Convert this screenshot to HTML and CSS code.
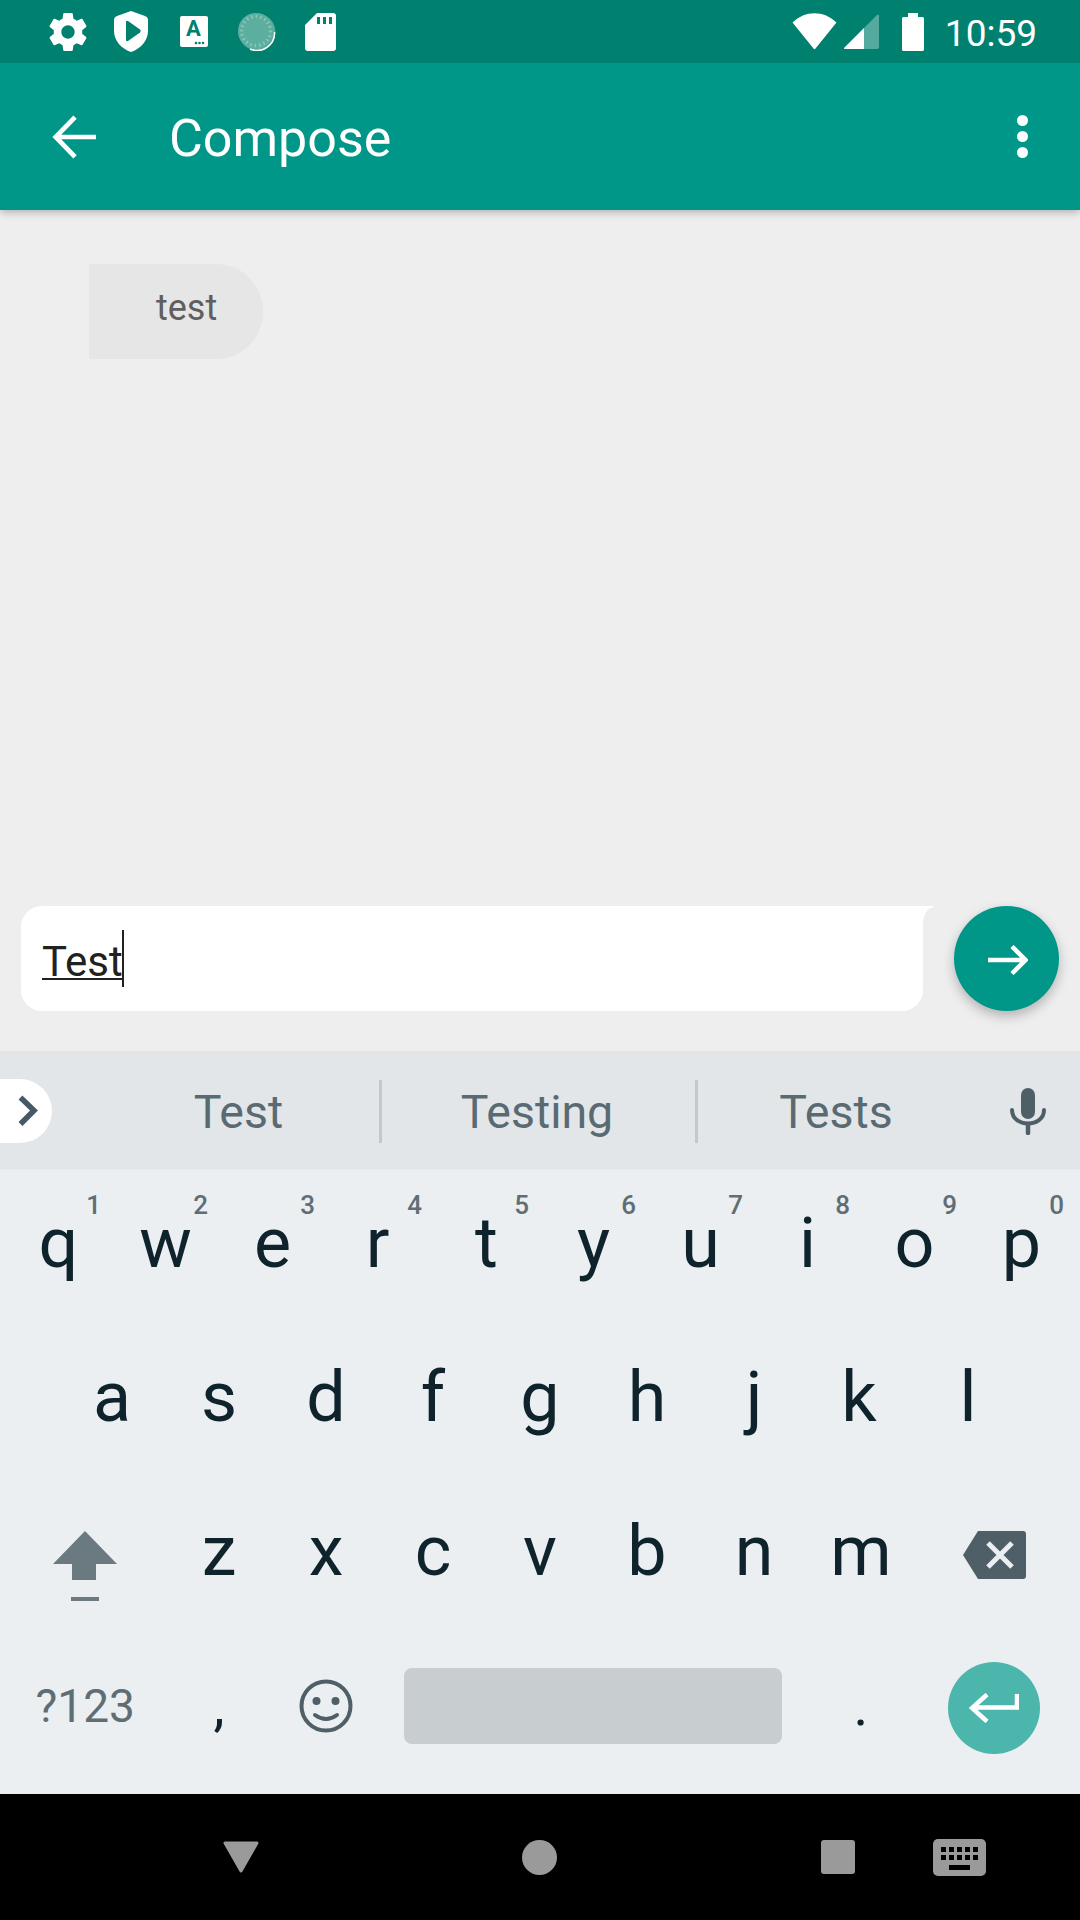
FILE: index.html
```html
<!DOCTYPE html>
<html lang="en">
<head>
<meta charset="utf-8">
<title>Compose</title>
<link rel="stylesheet" href="styles.css">
</head>
<body>
<div class="screen">
  <header class="status">
    <div class="status-left">
      <svg class="ic-gear" viewBox="2 2 20 20"><path fill="#fff" d="M19.43 12.98c.04-.32.07-.64.07-.98s-.03-.66-.07-.98l2.11-1.65c.19-.15.24-.42.12-.64l-2-3.46c-.12-.22-.39-.3-.61-.22l-2.49 1c-.52-.4-1.08-.73-1.69-.98l-.38-2.65C14.46 2.18 14.25 2 14 2h-4c-.25 0-.46.18-.49.42l-.38 2.65c-.61.25-1.17.59-1.69.98l-2.49-1c-.23-.09-.49 0-.61.22l-2 3.46c-.13.22-.07.49.12.64l2.11 1.65c-.04.32-.07.65-.07.98s.03.66.07.98l-2.11 1.65c-.19.15-.24.42-.12.64l2 3.46c.12.22.39.3.61.22l2.49-1c.52.4 1.08.73 1.69.98l.38 2.65c.03.24.24.42.49.42h4c.25 0 .46-.18.49-.42l.38-2.65c.61-.25 1.17-.59 1.69-.98l2.49 1c.23.09.49 0 .61-.22l2-3.46c.12-.22.07-.49-.12-.64l-2.11-1.65zM12 15.5c-1.93 0-3.5-1.57-3.5-3.5s1.57-3.5 3.5-3.5 3.5 1.57 3.5 3.5-1.57 3.5-3.5 3.5z"/></svg>
      <svg class="ic-shield" viewBox="0 0 34 41"><path fill="#fff" d="M17 0 L31 5 Q34 6 34 9 V20 C34 30 26 38 17 41 C8 38 0 30 0 20 V9 Q0 6 3 5 Z"/><path fill="#00806f" d="M12 11 Q12 9 14 10 L26 18.500 Q27.500 20 26 21.500 L14 30 Q12 31 12 29 Z"/></svg>
      <svg class="ic-a" viewBox="0 0 28 31"><rect width="28" height="31" rx="2" fill="#fff"/><text x="13.500" y="20" class="ic-a-text">A</text><circle cx="16" cy="27" r="1.300" fill="#00806f"/><circle cx="19.500" cy="27" r="1.300" fill="#00806f"/><circle cx="23" cy="27" r="1.300" fill="#00806f"/></svg>
      <svg class="ic-spin" viewBox="0 0 38 38">
        <circle cx="19" cy="19" r="18.500" fill="#fff" fill-opacity=".33"/>
        <circle cx="18" cy="18" r="18" fill="#5cae9f"/>
        <path d="M36.500 19 A17.500 17.500 0 0 1 12 36" fill="none" stroke="#fff" stroke-width="1.500"/>
        <circle cx="18" cy="18" r="14.500" fill="none" stroke="#8cc6ba" stroke-width="3.500" stroke-dasharray="1.500 3"/>
      </svg>
      <svg class="ic-sd" viewBox="0 0 31 38"><path fill-rule="evenodd" fill="#fff" d="M12 0 H28 Q31 0 31 3 V35 Q31 38 28 38 H3 Q0 38 0 35 V12 Z M12 4 V11 H15 V4 Z M18 4 V11 H21 V4 Z M24 4 V11 H27 V4 Z"/></svg>
    </div>
    <div class="status-right">
      <svg class="ic-wifi" viewBox="0 0 45 37"><path fill="#fff" d="M0.500 9.500 C13 -3 32 -3 44.500 9.500 L23.500 35.500 Q22.500 37 21.500 35.500 Z"/></svg>
      <svg class="ic-signal" viewBox="0 0 35 35"><path fill="#fff" fill-opacity=".33" d="M20 14 L33 1 Q35 -.5 35 2 V33 Q35 35 33 35 H20 Z"/><path fill="#fff" d="M20 14 V35 H1 Q-.5 35 .5 33.500 Z"/></svg>
      <svg class="ic-batt" viewBox="0 0 22 38"><path fill="#fff" d="M6 0 H16 V4 H20.500 Q22 4 22 5.500 V36.500 Q22 38 20.500 38 H1.500 Q0 38 0 36.500 V5.500 Q0 4 1.500 4 H6 Z"/></svg>
      <span class="clock">10:59</span>
    </div>
  </header>

  <div class="appbar">
    <svg class="ic-back" viewBox="0 0 42 42"><path fill="none" stroke="#fff" stroke-width="4.500" d="M42 21 H4 M22 2 L3.500 21 L22 40"/></svg>
    <h1 class="title">Compose</h1>
    <div class="more"><i></i><i></i><i></i></div>
  </div>

  <main class="chat">
    <div class="messages">
      <div class="bubble">test</div>
    </div>
    <div class="composer">
      <div class="field">
        <span class="typed">Test</span><span class="caret"></span>
      </div>
      <button class="send" type="button" aria-label="Send">
        <svg viewBox="0 0 40 30"><path fill="none" stroke="#fff" stroke-width="4.500" d="M0 15 H37 M24 1.500 L37.500 15 L24 28.500"/></svg>
      </button>
    </div>
  </main>

  <section class="keyboard">
    <div class="strip">
      <div class="expand"><svg viewBox="0 0 20 32"><path fill="none" stroke="#455a64" stroke-width="5.500" d="M2.500 2.500 L16 15.500 L2.500 29"/></svg></div>
      <div class="sugg sugg-1">Test</div>
      <span class="divider"></span>
      <div class="sugg sugg-2">Testing</div>
      <span class="divider"></span>
      <div class="sugg sugg-3">Tests</div>
      <svg class="ic-mic" viewBox="0 0 36 47"><rect x="11" y="0" width="14" height="31" rx="7" fill="#4f5f68"/><path d="M2 22 C2 40 34 40 34 22" fill="none" stroke="#4f5f68" stroke-width="4" stroke-linecap="round"/><path d="M18 36 V45" stroke="#4f5f68" stroke-width="4.500" stroke-linecap="round"/></svg>
    </div>
    <div class="keys">
      <div class="row">
        <div class="key">q<sup>1</sup></div><div class="key">w<sup>2</sup></div><div class="key">e<sup>3</sup></div><div class="key nudge">r<sup>4</sup></div><div class="key">t<sup>5</sup></div><div class="key">y<sup>6</sup></div><div class="key">u<sup>7</sup></div><div class="key">i<sup>8</sup></div><div class="key">o<sup>9</sup></div><div class="key">p<sup>0</sup></div>
      </div>
      <div class="row row-home">
        <div class="key">a</div><div class="key">s</div><div class="key">d</div><div class="key">f</div><div class="key">g</div><div class="key">h</div><div class="key">j</div><div class="key nudge">k</div><div class="key">l</div>
      </div>
      <div class="row">
        <div class="key wide">
          <svg class="ic-shift" viewBox="0 0 64 70"><path fill="#6b7a80" d="M32 0 L64 33 H43 V49 H19 V33 H0 Z"/><rect x="18" y="66" width="28" height="4" fill="#6b7a80"/></svg>
        </div>
        <div class="key">z</div><div class="key">x</div><div class="key">c</div><div class="key">v</div><div class="key">b</div><div class="key">n</div><div class="key">m</div>
        <div class="key wide">
          <svg class="ic-del" viewBox="0 0 63 48"><path fill="#4f5f68" d="M15 0 H60 Q63 0 63 3 V45 Q63 48 60 48 H15 L0 24 Z"/><path stroke="#ebeff2" stroke-width="5" d="M25 12 L49 36 M49 12 L25 36"/></svg>
        </div>
      </div>
      <div class="row">
        <div class="key wide sym">?123</div>
        <div class="key comma">,</div>
        <div class="key">
          <svg class="ic-emoji" viewBox="0 0 54 54"><circle cx="27" cy="27" r="24.500" fill="none" stroke="#4f5f68" stroke-width="4"/><circle cx="17.500" cy="22" r="4" fill="#4f5f68"/><circle cx="36.500" cy="22" r="4" fill="#4f5f68"/><path d="M16 36 Q27 44 38 36" fill="none" stroke="#4f5f68" stroke-width="4" stroke-linecap="round"/></svg>
        </div>
        <div class="key space"><span class="spacebar"></span></div>
        <div class="key period">.</div>
        <div class="key wide">
          <span class="enter"><svg viewBox="0 0 50 30"><path fill="none" stroke="#fff" stroke-width="4.500" d="M48 1 V14.500 H3 M18 1.500 L3 15 L18 28.500"/></svg></span>
        </div>
      </div>
    </div>
  </section>

  <nav class="navbar">
    <svg class="ic-navback" viewBox="0 0 36 32"><path fill="#9a9a9a" stroke="#9a9a9a" stroke-width="3" stroke-linejoin="round" d="M2 2 H34 L18 30 Z"/></svg>
    <span class="ic-home"></span>
    <span class="ic-recent"></span>
    <svg class="ic-kbd" viewBox="0 0 53 37"><rect width="53" height="37" rx="5" fill="#9a9a9a"/>
      <g fill="#000"><rect x="8" y="8" width="5" height="5"/><rect x="16" y="8" width="5" height="5"/><rect x="24" y="8" width="5" height="5"/><rect x="32" y="8" width="5" height="5"/><rect x="40" y="8" width="5" height="5"/><rect x="8" y="16" width="5" height="5"/><rect x="16" y="16" width="5" height="5"/><rect x="24" y="16" width="5" height="5"/><rect x="32" y="16" width="5" height="5"/><rect x="40" y="16" width="5" height="5"/><rect x="16" y="26" width="21" height="5"/></g></svg>
  </nav>
</div>
</body>
</html>
```
FILE: styles.css
```css
* { box-sizing: border-box; }
html, body { margin: 0; padding: 0; }
body { font-family: Roboto, "Liberation Sans", sans-serif; background: #eee; }
.screen { width: 1080px; height: 1920px; display: flex; flex-direction: column; overflow: hidden; }

.status { height: 63px; flex: none; background: #00806f; display: flex; align-items: center; justify-content: space-between; padding: 0 43px 0 49px; position: relative; z-index: 3; }
.status-left, .status-right { display: flex; align-items: center; }
.status svg { display: block; flex: none; }
.ic-gear { width: 38px; height: 38px; }
.ic-shield { width: 34px; height: 41px; margin-left: 27px; }
.ic-a { width: 28px; height: 31px; margin-left: 32px; }
.ic-a-text { font: 700 22px Roboto, sans-serif; fill: #00806f; text-anchor: middle; }
.ic-spin { width: 38px; height: 38px; margin-left: 30px; }
.ic-sd { width: 31px; height: 38px; margin-left: 29px; }
.ic-wifi { width: 45px; height: 37px; }
.ic-signal { width: 35px; height: 35px; margin-left: 7px; }
.ic-batt { width: 22px; height: 38px; margin-left: 23px; }
.clock { color: #fff; font-size: 37px; line-height: 63px; margin-left: 21px; padding-top: 3px; }

.appbar { height: 147px; flex: none; background: #009688; display: flex; align-items: center; padding: 0 52px 0 52px; box-shadow: 0 2px 8px rgba(0,0,0,.28); position: relative; z-index: 2; }
.ic-back { width: 44px; height: 44px; flex: none; }
.title { margin: 0 0 0 73px; padding-top: 3px; flex: 1; color: #fff; font-size: 52px; font-weight: 400; }
.more { display: flex; flex-direction: column; gap: 5px; }
.more i { display: block; width: 11px; height: 11px; border-radius: 50%; background: #fff; }

.chat { flex: 1; min-height: 0; display: flex; flex-direction: column; background: #eee; }
.messages { flex: 1; padding: 54px 0 0 89px; }
.bubble { width: 174px; height: 95px; background: #e6e6e6; color: #5f5f5f; border-radius: 0 47px 47px 0; font-size: 36px; padding: 23px 0 0 67px; line-height: 42px; }
.composer { flex: none; display: flex; align-items: flex-start; padding: 0 21px 42px; justify-content: space-between; }
.field { width: 902px; height: 105px; background: #fff; border-radius: 21px 0 21px 21px; display: flex; align-items: center; padding-left: 21px; position: relative; }
.field::after { content: ""; position: absolute; right: -11px; top: 0; width: 11px; height: 17px; background: radial-gradient(ellipse 11px 16px at 100% 100%, transparent 97%, #fff 100%); border-top-right-radius: 2px; }
.typed { font-size: 42px; color: #212121; line-height: 58px; border-bottom: 2px solid #212121; height: 47px; margin-bottom: 4px; }
.caret { width: 2px; height: 57px; background: #212121; margin-left: -1px; }
.send { width: 105px; height: 105px; padding: 0; border: 0; border-radius: 50%; background: #009688; display: flex; align-items: center; justify-content: center; box-shadow: 0 5px 12px rgba(0,0,0,.25); }
.send svg { width: 40px; height: 30px; margin-left: 3px; margin-top: 2px; }

.keyboard { flex: none; background: #ebeff2; }
.strip { height: 116px; background: #e2e6e9; display: flex; align-items: center; box-shadow: 0 -1px 3px rgba(0,0,0,.08); position: relative; }
.expand { width: 52px; height: 64px; background: #fff; border-radius: 0 32px 32px 0; display: flex; align-items: center; padding-left: 18px; flex: none; }
.expand svg { width: 20px; height: 32px; }
.sugg { font-size: 46.500px; color: #5a6a72; text-align: center; padding-top: 2px; }
.sugg-1 { width: 327px; padding-left: 46px; }
.sugg-2 { width: 313px; padding-right: 3px; }
.sugg-3 { width: 276px; }
.divider { width: 3px; height: 63px; background: #c3c8cb; flex: none; }
.ic-mic { width: 36px; height: 47px; margin-left: 36px; }

.keys { height: 625px; display: flex; flex-direction: column; }
.row { flex: none; height: 154.200px; display: flex; justify-content: center; }
.key { width: 107px; position: relative; display: flex; align-items: center; justify-content: center; font-size: 70px; color: #0f232c; line-height: 1; padding-bottom: 6px; }
.key sup { position: absolute; top: 23px; right: 11px; font-size: 26px; font-weight: 500; color: #5f6e75; line-height: 1; }
.nudge { padding-right: 4px; }
.wide { width: 160.500px; }
.sym { font-size: 46px; color: #5f6e75; }
.comma, .period { font-size: 56px; }
.space { width: 428px; }
.spacebar { display: block; width: 378px; height: 76px; background: #c8cdd0; border-radius: 8px; margin-right: 2px; }
.enter { width: 92px; height: 92px; border-radius: 50%; background: #4db6ac; display: flex; align-items: center; justify-content: center; margin-top: 5px; margin-right: 1px; }
.enter svg { width: 50px; height: 30px; }
.ic-shift { width: 64px; height: 70px; margin-top: 29px; }
.ic-del { width: 63px; height: 48px; margin-top: 8px; }
.ic-emoji { width: 54px; height: 54px; }

.navbar { height: 126px; flex: none; background: #000; display: flex; align-items: center; padding: 0 94px 0 223px; }
.ic-navback { width: 36px; height: 32px; }
.ic-home { width: 35px; height: 35px; border-radius: 50%; background: #9a9a9a; margin-left: 263px; }
.ic-recent { width: 34px; height: 34px; border-radius: 3px; background: #9a9a9a; margin-left: 264px; }
.ic-kbd { width: 53px; height: 37px; margin-left: 78px; }
```
